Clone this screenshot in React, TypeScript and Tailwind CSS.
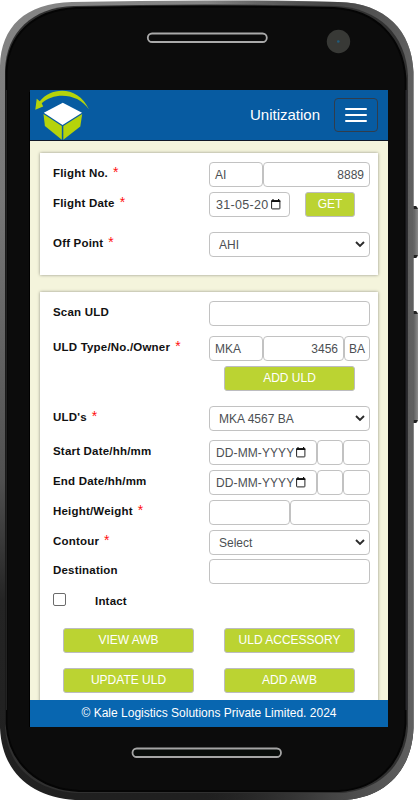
import type { ReactNode } from "react";

function PhoneFrame() {
  return (
    <svg className="absolute inset-0" width="418" height="800" viewBox="0 0 418 800" fill="none">
      <defs>
        <linearGradient id="rim" x1="0" y1="0" x2="0" y2="1">
          <stop offset="0" stopColor="#858585" />
          <stop offset="0.25" stopColor="#777777" />
          <stop offset="0.6" stopColor="#505050" />
          <stop offset="0.75" stopColor="#242424" />
          <stop offset="1" stopColor="#202020" />
        </linearGradient>
        <linearGradient id="rimRight" x1="0" y1="0" x2="1" y2="0">
          <stop offset="0" stopColor="#303030" stopOpacity="0" />
          <stop offset="0.6" stopColor="#444444" />
          <stop offset="1" stopColor="#606060" />
        </linearGradient>
        <linearGradient id="key" x1="0" y1="0" x2="1" y2="0">
          <stop offset="0" stopColor="#505050" />
          <stop offset="1" stopColor="#8a8a8a" />
        </linearGradient>
      </defs>
      <path d="M412 206h4q2 1 2 4v44q0 3-2 4h-4z" fill="url(#key)" />
      <path d="M412 206h4l2 3h-6zM412 255h6l-2 3h-4z" fill="#222222" />
      <path d="M412 311h4q2 1 2 4v104q0 3-2 4h-4z" fill="url(#key)" />
      <path d="M412 311h4l2 3h-6zM412 420h6l-2 3h-4z" fill="#222222" />
      <path d="M0 66C1 27 25 3 72 2Q207-1 338 2C386 3 412 31 413.500 72V728C412 773 382 799 342 800H75C32 797 2 773 0 728z" fill="url(#rim)" />
      <path d="M207 0Q280 0 338 2C386 3 412 31 413.500 72V728C412 773 382 799 342 800H207z" fill="url(#rimRight)" />
      <path d="M5 70C6 33 32 7 74 6Q207 3 336 6C378 8 406 34 408 76V726C406 766 378 791 340 793H77C36 791 7 767 5 727z" fill="#303030" />
      <path d="M6.500 72C8 35 33 10 76 8Q207 5 334 8C376 10 403 38 405.500 79V724C403 763 377 789 339 791H79C39 789 9 764 6.500 724z" fill="#0c0c0c" stroke="#050505" strokeWidth="2" />
      <path d="M6.500 90V710" stroke="#222222" />
      <path d="M406.500 90V710" stroke="#28282c" strokeWidth="2" />
      <path d="M29.500 92V727" stroke="#000000" />
      <rect x="147.800" y="33.500" width="119" height="8.500" rx="4.250" fill="#0b0b0b" stroke="#aaaaaa" strokeWidth="1.800" />
      <rect x="132.500" y="748.500" width="148.500" height="8.500" rx="4.250" fill="#080c0a" stroke="#a5a5a5" strokeWidth="1.800" />
      <circle cx="338.500" cy="41.500" r="11.700" fill="#383936" />
      <circle cx="338.300" cy="41.500" r="1.300" fill="#205c7c" />
    </svg>
  );
}

function Logo() {
  return (
    <svg className="ml-[4px] block" width="56" height="50" viewBox="34 90 56 50">
      <path d="M35.300 109.700L36.700 98.800L39.800 101.200C51 87 78 85 89 109.500C78 93 54 92 41.700 103.200L43.200 106.500z" fill="#b5d30b" />
      <path d="M62.800 102.800L82 112.700L62.500 125L43.800 112.800z" fill="#ffffff" />
      <path d="M43.500 114L61.800 126V139.800L44.900 126z" fill="#b5d30b" />
      <path d="M82.200 114L63.300 126V139.800L80.300 126.500z" fill="#b5d30b" />
    </svg>
  );
}

function CalendarIcon() {
  return (
    <svg width="10" height="11" viewBox="0 0 10 11" className="-mt-px shrink-0" fill="none">
      <rect x="0.600" y="1.600" width="8.300" height="8.300" rx="0.600" stroke="#222222" strokeWidth="1" />
      <path d="M0.200 1.200H9.300V3H0.200zM1.400 0H2.600V1.500H1.400zM7 0H8.200V1.500H7z" fill="#111111" />
    </svg>
  );
}

function Field({ className = "", children }: { className?: string; children?: ReactNode }) {
  return (
    <div className={`flex h-[25px] shrink-0 items-center overflow-hidden rounded-[4px] border border-[#c2c2c2] bg-white pt-px whitespace-nowrap text-[#4c4f53] ${className}`}>
      {children}
    </div>
  );
}

function Select({ children }: { children: string }) {
  return (
    <Field className="w-[161px] justify-between pr-[4px] pl-[9px] text-[12px]">
      <span>{children}</span>
      <svg width="10" height="7" viewBox="0 0 10 7" fill="none" className="-mt-px">
        <path d="M1 1L5 5L9 1" stroke="#2b2b2b" strokeWidth="1.900" />
      </svg>
    </Field>
  );
}

function Row({ label, required, className = "", children }: { label: string; required?: boolean; className?: string; children: ReactNode }) {
  return (
    <div className={`flex h-[25px] items-center ${className}`}>
      <div className="flex h-[25px] w-[156px] shrink-0 text-[11.5px] leading-[22px] font-bold tracking-[0.2px] whitespace-nowrap text-[#111111]">
        {label}
        {required && <span className="ml-[5px] text-[14px] leading-[20px] font-normal text-[#ff1010]">*</span>}
      </div>
      {children}
    </div>
  );
}

function Button({ className = "w-[131px]", children }: { className?: string; children: string }) {
  return (
    <button className={`flex h-[25px] items-center justify-center rounded-[3px] border border-[#bcbcc0] bg-[#bbd332] pb-[2px] text-[12px] whitespace-nowrap text-white ${className}`}>
      {children}
    </button>
  );
}

function EmptyDateRow({ label, className }: { label: string; className: string }) {
  return (
    <Row label={label} className={className}>
      <Field className="w-[108px] gap-[2px] pl-[6px] text-[12px] tracking-[0.1px]">
        DD-MM-YYYY
        <CalendarIcon />
      </Field>
      <Field className="w-[26px]" />
      <Field className="w-[27px]" />
    </Row>
  );
}

const cardClass = "mx-[10px] bg-white pl-[13px] shadow-[0_0_3px_rgba(0,0,0,0.4)]";

export default function App() {
  return (
    <div className="relative h-[800px] w-[418px] overflow-hidden bg-white font-['Liberation_Sans',Arial,sans-serif]">
      <PhoneFrame />
      <div className="relative mt-[90px] ml-[30px] flex h-[637px] w-[358px] flex-col overflow-hidden bg-[#f4f4dc]">
        <header className="flex h-[51px] shrink-0 border-b border-[#111827] bg-[#075ba1]">
          <Logo />
          <div className="ml-auto pt-[16px] text-[15px] leading-[18px] text-white">Unitization</div>
          <button className="mt-[8px] mr-[10px] ml-[14px] flex h-[34px] w-[44px] flex-col items-center justify-center gap-[4px] rounded-[4px] border border-[#303d4c]">
            <span className="h-[2px] w-[22px] rounded-full bg-white" />
            <span className="h-[2px] w-[22px] rounded-full bg-white" />
            <span className="h-[2px] w-[22px] rounded-full bg-white" />
          </button>
        </header>
        <main className="min-h-0 flex-1 overflow-hidden pt-[12px]">
          <section className={`h-[122px] pt-[9px] ${cardClass}`}>
            <Row label="Flight No." required>
              <Field className="w-[54px] pl-[5px] text-[12px]">AI</Field>
              <Field className="w-[107px] justify-end pr-[5px] text-[12px]">8889</Field>
            </Row>
            <Row label="Flight Date" required className="mt-[5px]">
              <Field className="w-[81px] gap-[3px] pl-[6px] text-[12.5px] tracking-[0.3px]">
                31-05-20
                <CalendarIcon />
              </Field>
              <Button className="ml-[15px] w-[50px]">GET</Button>
            </Row>
            <Row label="Off Point" required className="mt-[15px]">
              <Select>AHI</Select>
            </Row>
          </section>
          <section className={`mt-[17px] h-[420px] pt-[9px] ${cardClass}`}>
            <Row label="Scan ULD"><Field className="w-[161px]" /></Row>
            <Row label="ULD Type/No./Owner" required className="mt-[10px]">
              <Field className="w-[54px] pl-[5px] text-[12px]">MKA</Field>
              <Field className="w-[81px] justify-end pr-[5px] text-[12px]">3456</Field>
              <Field className="w-[26px] pl-[4px] text-[12px]">BA</Field>
            </Row>
            <div className="mt-[5px] ml-[171px]"><Button>ADD ULD</Button></div>
            <Row label="ULD's" required className="mt-[15px]"><Select>MKA 4567 BA</Select></Row>
            <EmptyDateRow label="Start Date/hh/mm" className="mt-[9px]" />
            <EmptyDateRow label="End Date/hh/mm" className="mt-[5px]" />
            <Row label="Height/Weight" required className="mt-[5px]">
              <Field className="w-[81px]" />
              <Field className="w-[80px]" />
            </Row>
            <Row label="Contour" required className="mt-[5px]"><Select>Select</Select></Row>
            <Row label="Destination" className="mt-[4px]"><Field className="w-[161px]" /></Row>
            <div className="mt-[9px] flex h-[16px] items-start text-[11.5px] leading-[16px] font-bold tracking-[0.2px] text-[#111111]">
              <span className="size-[13px] rounded-[2px] border border-[#6b6b6b] bg-white" />
              <span className="ml-[29px]">Intact</span>
            </div>
            <div className="mt-[19px] ml-[10px] grid w-[292px] grid-cols-2 gap-x-[30px] gap-y-[15px]">
              <Button>VIEW AWB</Button>
              <Button>ULD ACCESSORY</Button>
              <Button>UPDATE ULD</Button>
              <Button>ADD AWB</Button>
            </div>
          </section>
        </main>
        <footer className="h-[27px] shrink-0 bg-[#0866b0] text-center text-[12px] leading-[26px] text-white">
          © Kale Logistics Solutions Private Limited. 2024
        </footer>
      </div>
    </div>
  );
}
